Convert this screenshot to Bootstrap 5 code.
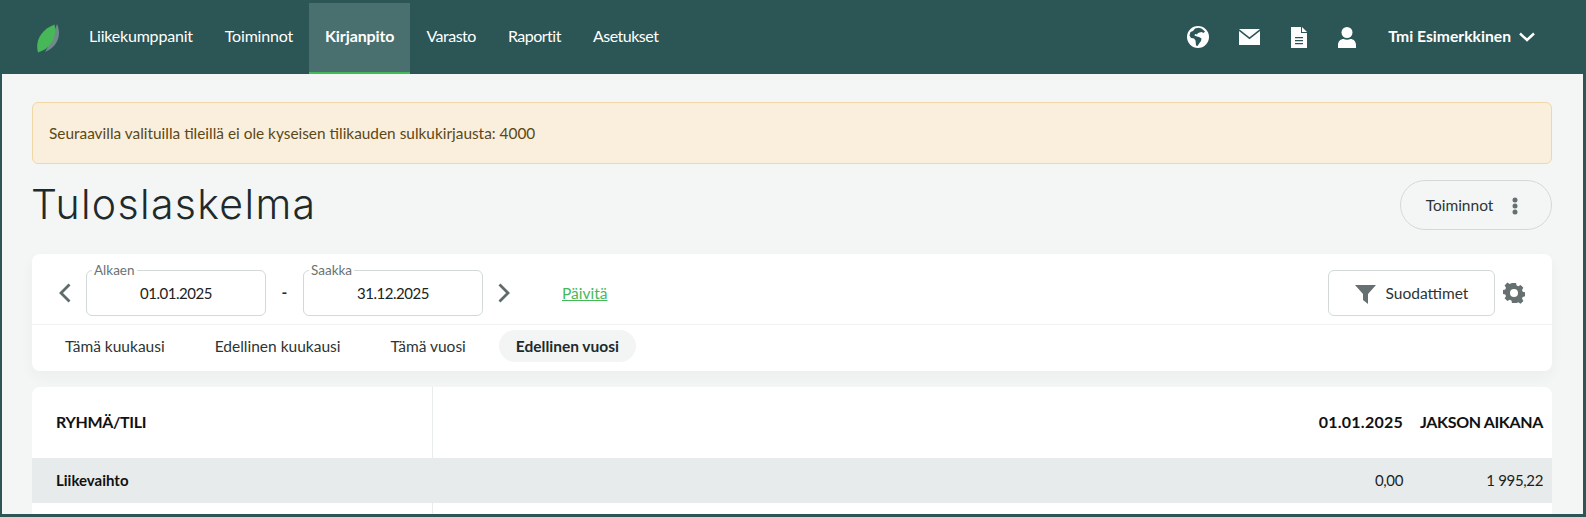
<!DOCTYPE html>
<html lang="fi">
<head>
<meta charset="utf-8">
<title>Tuloslaskelma</title>
<link rel="stylesheet" href="https://cdn.jsdelivr.net/npm/bootstrap@5.3.0/dist/css/bootstrap.min.css">
<style>
html,body{height:100%;overflow:hidden}
body{background:#2c5555;font-family:"Lato","Liberation Sans",sans-serif;font-size:15.5px;color:#212a2a}
.app-frame{height:517px;display:flex;flex-direction:column;padding:0 3px 3px 2px;overflow:hidden}
.top-bar{height:74px;padding:3px 0 0 0;flex:none;background:#2c5555}
.logo-slot{width:71px;padding-left:34px}
.top-link{display:flex;align-items:center;height:71px;padding:0 16px 3px;color:#fff;text-decoration:none;font-size:16px;letter-spacing:-.2px;border-bottom:2px solid transparent}
.top-link.is-on{background:#4a6f6f;font-weight:700;border-bottom:2px solid #45b95a;letter-spacing:-.1px}
.top-link.is-tight{letter-spacing:-.5px}
.top-icons{height:68px;padding-right:48px;color:#fff}
.top-icon{display:block;fill:#fff}
.user-name{font-weight:700;font-size:15.7px;color:#fff}
.page-area{flex:1;background:#f4f6f6;padding:28px 31px 0 30px;overflow:hidden;min-height:0}
.warn-box{height:62px;background:#faefdd;border:1px solid #f1d7a6;border-radius:6px;color:#5c4816;padding:2px 16px 0;margin:0;display:flex;align-items:center;font-size:15.4px}
.title-row{height:90px;padding-top:16px}
.page-title{font-family:"Inter","Lato",sans-serif;font-weight:300;font-size:41px;letter-spacing:1.35px;line-height:1;margin:4px 0 0 -1px;color:#212a2a}
.action-pill{height:50px;width:152px;border:1px solid #d3d9d9;border-radius:25px;background:transparent;color:#2c3535;font-size:15.5px;padding:2px 8px 0 0;gap:19px}
.filter-card{height:117px;background:#fff;border-radius:8px;border:0;box-shadow:0 6px 14px rgba(40,60,60,.04)}
.filter-top{height:71px;padding:16px 27px 0 26px;border-bottom:1px solid #f0f2f2}
.date-box{position:relative;width:180px;height:46px;border:1px solid #d3d9d9;border-radius:6px;display:flex;align-items:center;justify-content:center;font-size:15px;letter-spacing:-.45px;color:#1d2222}
.date-label{position:absolute;left:5px;top:-8px;background:#fff;padding:0 2px;font-size:13.5px;letter-spacing:0;line-height:14px;color:#6a7373}
.date-dash{width:37px;text-align:center;font-weight:700}
.refresh-link{color:#45b95a;margin-left:51px;font-size:15.5px;padding-top:2px}
.filter-btn{height:46px;width:167px;border:1px solid #d3d9d9;border-radius:6px;background:#fff;color:#2c3535;font-size:15.5px;padding:2px 0 0;gap:10px}
.quick-row{padding:5px 0 0 16px;gap:0}
.quick-item{height:32px;display:flex;align-items:center;padding:2px 17px 0;margin-right:16px;border-radius:16px;color:#2c3535;font-size:15.5px;text-decoration:none}
.quick-item.is-on{background:#f3f5f5;font-weight:700;margin-right:0;color:#212a2a}
.result-card{margin-top:16px;background:#fff;border-radius:8px 8px 0 0;overflow:hidden;border:0}
.result-table{margin:0;table-layout:fixed;width:100%;color:#111}
.result-table th,.result-table td{border:0;padding:0;vertical-align:middle}
.result-table thead tr{height:71px}
.result-table thead th{font-size:16px;font-weight:700;color:#111;letter-spacing:-.35px;padding-bottom:2px}
.result-table .name-col{width:400px;padding-left:24px;border-right:1px solid #e9ecec}
.result-table .spacer-col{width:auto}
.result-table thead .date-col{letter-spacing:.25px}
.result-table .date-col{width:120px;text-align:right}
.result-table .period-col{width:149px;text-align:right;padding-right:9px}
.result-table tr.group-row{height:45px}
.result-table tr.group-row td{background:#e8ebeb;border-right:0;font-size:15px;--bs-table-accent-bg:transparent;color:#1a1f1f;letter-spacing:-.35px}
.result-table tr.group-row .name-col{font-weight:700;color:#111;letter-spacing:0}
.result-table tr.blank-row{height:30px}
.dir-arrow{fill:none;stroke:#5f6b6b;stroke-width:2.8}
.gap-after-arrow{margin-right:16px}
.gap-before-arrow{margin-left:14px}
.mail-icon{margin-left:6px;margin-right:31px}
.file-icon{margin-right:31px}
.person-icon{margin-right:32px}
.date-first{margin-left:-2px}
</style>
</head>
<body>
<div class="app-frame">
  <nav class="top-bar d-flex align-items-start justify-content-between">
    <div class="d-flex align-items-center">
      <div class="logo-slot">
        <svg width="24" height="30" viewBox="0 0 24 30" class="d-block"><path d="M21 0C25 8 24 22 9 28 15 18 18 8 21 0Z" fill="#6f8a8a"/><path d="M18.500 0.500C21 10 17 24 2 28.500-1 18 4 6 18.500 0.500Z" fill="#46b858"/></svg>
      </div>
      <a class="top-link" href="#">Liikekumppanit</a>
      <a class="top-link" href="#">Toiminnot</a>
      <a class="top-link is-on" href="#">Kirjanpito</a>
      <a class="top-link is-tight" href="#">Varasto</a>
      <a class="top-link is-tight" href="#">Raportit</a>
      <a class="top-link is-tight" href="#">Asetukset</a>
    </div>
    <div class="top-icons d-flex align-items-center">
      <svg class="top-icon me-4" width="22" height="22" viewBox="0 0 22 22"><path fill-rule="evenodd" d="M11 0a11 11 0 1 0 0 22 11 11 0 0 0 0-22ZM8 2.500 6 5 3.500 6 2.500 9.500 4 12l3 .5 1.500 2 .5 5 1.500.500 2-3 1.500-2 .5-2.500-2.500-1.500-2-.5-2.500-1 .5-1.500 2 .5 1-1.500L14.500 6l2 1 1.500-1.500L14.500 2.500l-3-.7Z"/></svg>
      <svg class="top-icon mail-icon" width="21" height="16" viewBox="0 0 21 16"><path d="M0 0h21L10.500 8.300Z"/><path d="M0 2v14h21V2L10.500 10.300Z"/></svg>
      <svg class="top-icon file-icon" width="16" height="21" viewBox="0 0 16 21"><path fill-rule="evenodd" d="M0 0h10v6h6v15H0ZM4 10v1.300h8V10Zm0 3v1.300h8V13Zm0 3v1.300h8V16Z"/><path d="M11 0l5 5h-5Z"/></svg>
      <svg class="top-icon person-icon" width="18" height="21" viewBox="0 0 18 21"><circle cx="9" cy="5.500" r="5.500"/><path d="M0 21v-3c0-4 3-6 5.500-6 2 1 5 1 7 0 2.500 0 5.500 2 5.500 6v3Z"/></svg>
      <span class="user-name">Tmi Esimerkkinen</span>
      <svg class="ms-2" width="16" height="10" viewBox="0 0 16 10" fill="none" stroke="#fff" stroke-width="2.400"><path d="M1 1.500 8 8l7-6.500"/></svg>
    </div>
  </nav>
  <main class="page-area">
    <div class="warn-box alert" role="alert">Seuraavilla valituilla tileillä ei ole kyseisen tilikauden sulkukirjausta: 4000</div>
    <div class="title-row d-flex justify-content-between align-items-start">
      <h1 class="page-title">Tuloslaskelma</h1>
      <button class="action-pill btn d-flex align-items-center justify-content-center" type="button">Toiminnot
        <svg width="6" height="18" viewBox="0 0 6 18" fill="#667070"><circle cx="3" cy="3" r="2.500"/><circle cx="3" cy="9" r="2.500"/><circle cx="3" cy="15" r="2.500"/></svg>
      </button>
    </div>
    <section class="filter-card card">
      <div class="filter-top d-flex align-items-start justify-content-between">
        <div class="d-flex align-items-center">
          <svg width="14" height="20" viewBox="0 0 14 20" class="dir-arrow gap-after-arrow"><path d="M11.500 1.500 3 10l8.500 8.500"/></svg>
          <div class="date-box date-first"><span class="date-label">Alkaen</span>01.01.2025</div>
          <div class="date-dash">-</div>
          <div class="date-box"><span class="date-label">Saakka</span>31.12.2025</div>
          <svg width="14" height="20" viewBox="0 0 14 20" class="dir-arrow gap-before-arrow"><path d="M2.500 1.500 11 10l-8.500 8.500"/></svg>
          <a class="refresh-link" href="#">Päivitä</a>
        </div>
        <div class="d-flex align-items-center gap-2">
          <button class="filter-btn btn d-flex align-items-center justify-content-center" type="button">
            <svg width="21" height="19" viewBox="0 0 21 19" fill="#667070"><path d="M0 0h21l-8 9v10l-5-4V9Z"/></svg>
            Suodattimet</button>
          <svg width="22" height="22" viewBox="0 0 22 22"><path fill="#667070" fill-rule="evenodd" d="M9 1h4l.6 2.600 1.700.7 2.300-1.400 2.800 2.800-1.400 2.300.7 1.700 2.600.6v4l-2.600.6-.7 1.700 1.400 2.300-2.800 2.800-2.300-1.400-1.700.7L13 21H9l-.6-2.600-1.700-.7-2.300 1.400-2.800-2.800L3 14.300l-.7-1.700L-.3 12V8l2.600-.6.700-1.700L1.600 3.400l2.800-2.800 2.300 1.400 1.700-.7ZM11 7a4 4 0 1 0 0 8 4 4 0 0 0 0-8Z"/></svg>
        </div>
      </div>
      <div class="quick-row d-flex">
        <a class="quick-item" href="#">Tämä kuukausi</a>
        <a class="quick-item" href="#">Edellinen kuukausi</a>
        <a class="quick-item" href="#">Tämä vuosi</a>
        <a class="quick-item is-on" href="#">Edellinen vuosi</a>
      </div>
    </section>
    <section class="result-card card">
      <table class="result-table table">
        <thead>
          <tr><th class="name-col">RYHMÄ/TILI</th><th class="spacer-col"></th><th class="date-col">01.01.2025</th><th class="period-col">JAKSON AIKANA</th></tr>
        </thead>
        <tbody>
          <tr class="group-row"><td class="name-col">Liikevaihto</td><td class="spacer-col"></td><td class="date-col">0,00</td><td class="period-col">1 995,22</td></tr>
          <tr class="blank-row"><td class="name-col"></td><td></td><td></td><td></td></tr>
        </tbody>
      </table>
    </section>
  </main>
</div>
</body>
</html>
